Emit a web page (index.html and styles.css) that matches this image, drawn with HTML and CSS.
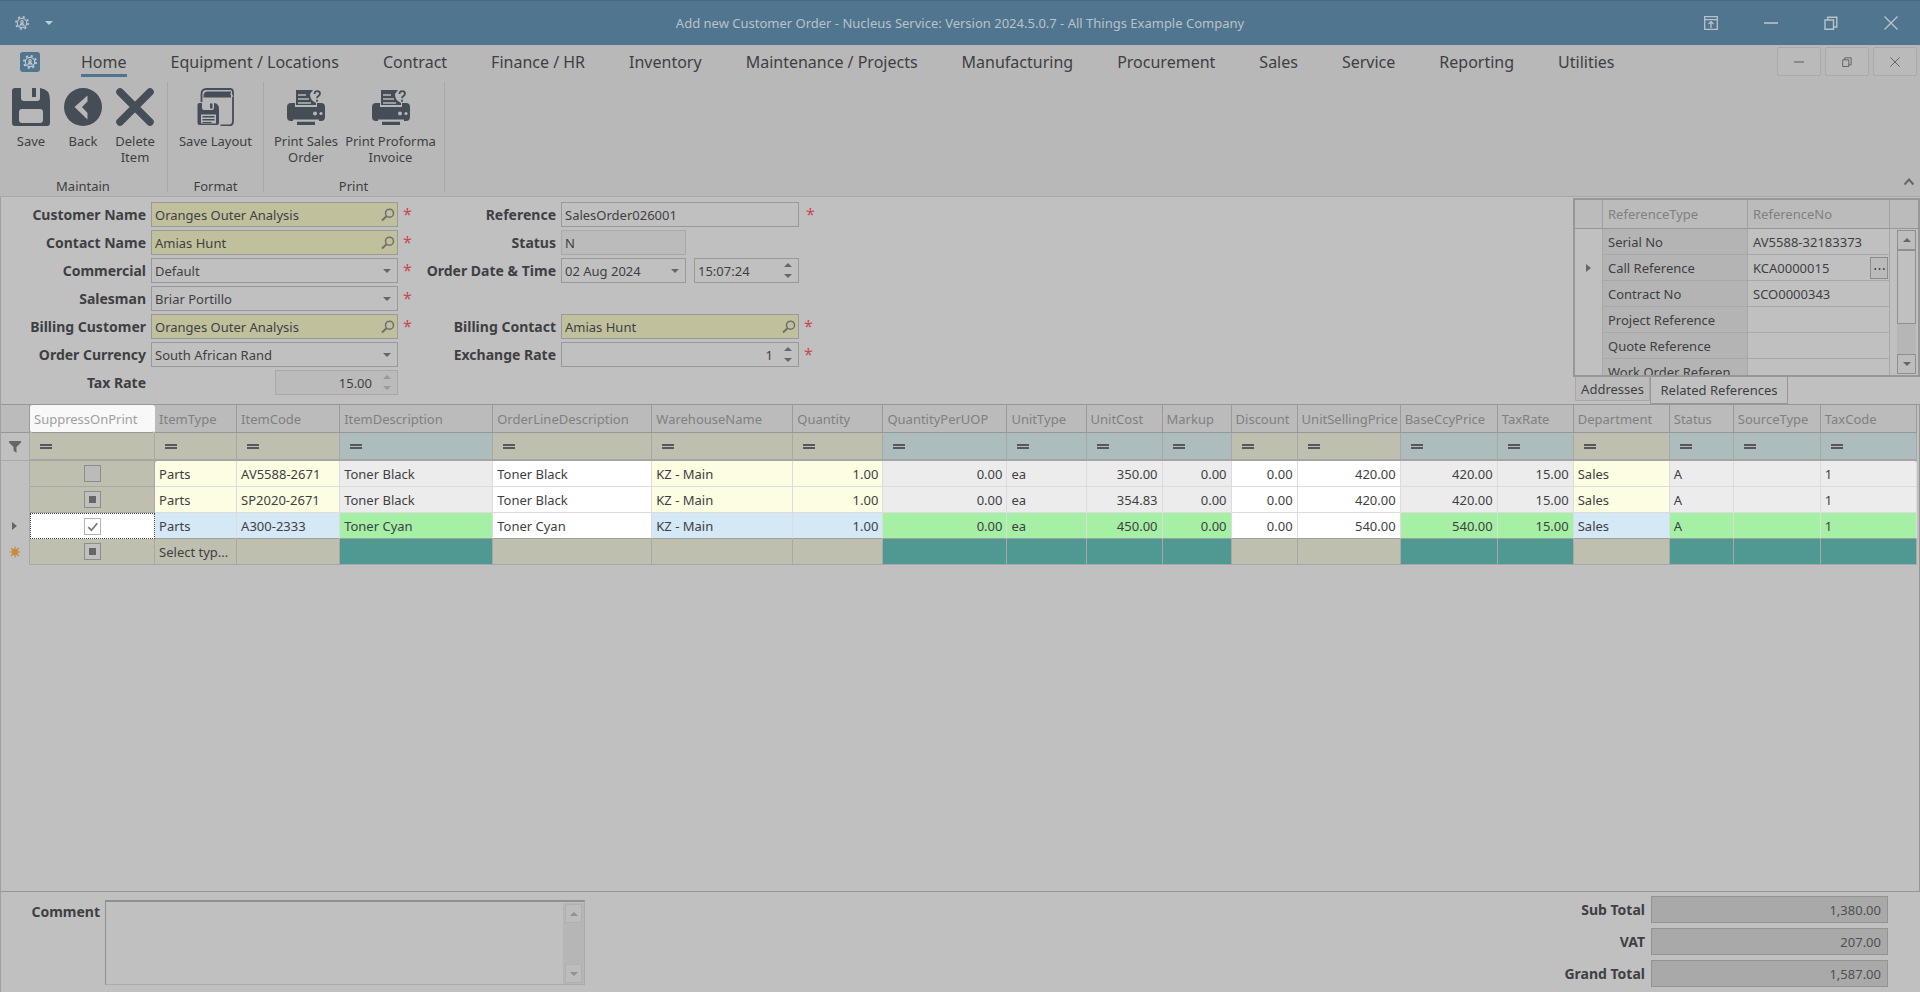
FILE: index.html
```html
<!DOCTYPE html>
<html lang="en">
<head>
<meta charset="utf-8">
<title>Add new Customer Order - Nucleus Service</title>
<link rel="stylesheet" href="styles.css">
</head>
<body>
<svg class="defs" aria-hidden="true">
  <symbol id="gear" viewBox="0 0 24 24"><g fill="none" stroke="currentColor" stroke-width="2"><circle cx="12" cy="12" r="8"/><circle cx="12" cy="12" r="10.5" stroke-width="3" stroke-dasharray="3.6 4.65"/><circle cx="12" cy="10" r="2"/><path d="M8 17l2.500-4h3l2.500 4M12 13v4"/></g></symbol>
  <symbol id="lens" viewBox="0 0 14 14"><g fill="none" stroke="currentColor" stroke-width="1.500"><circle cx="8.500" cy="5.200" r="4"/><path d="M5.500 8.200L1 12.500" stroke-width="2"/></g></symbol>
  <symbol id="minus" viewBox="0 0 14 14"><path d="M0 7h14" stroke="currentColor" stroke-width="1.600"/></symbol>
  <symbol id="restore" viewBox="0 0 14 14"><path d="M1 4h8.500v9.300H1zM3.800 4V1.200h9V11H9.500" fill="none" stroke="currentColor" stroke-width="1.400"/></symbol>
  <symbol id="cross" viewBox="0 0 14 14"><path d="M.5.5l13 13M13.500.5l-13 13" stroke="currentColor" stroke-width="1.400"/></symbol>
  <symbol id="printer" viewBox="0 0 38 38"><g fill="currentColor">
    <path d="M9 2h17l-3 4 1 5 5 4v2H9z"/><path d="M4 15h4v4h22v-4h4a4 4 0 0 1 4 4v10a4 4 0 0 1-4 4H4a4 4 0 0 1-4-4V19a4 4 0 0 1 4-4z"/><path d="M10 33.500h18V37H10z"/></g>
    <path d="M11 7h8M11 11h11M11 15h13" stroke="#b8b8b8" stroke-width="1.500"/><path d="M6 32.500h26" stroke="#b8b8b8" stroke-width="2"/><circle cx="28" cy="25.500" r="2" fill="#b8b8b8"/><circle cx="34" cy="25.500" r="1.600" fill="#b8b8b8"/>
    <circle cx="30" cy="8" r="6.500" fill="#b8b8b8"/><path d="M27.500 6q0-2.800 2.700-2.800T33 5.600Q33 7 31.500 8T30 10.200M30 11.800v2" fill="none" stroke="currentColor" stroke-width="1.800"/></symbol>
</svg>

<header class="titlebar">
  <div class="quick">
    <button class="plain" aria-label="Application"><svg class="i14"><use href="#gear"/></svg></button>
    <button class="plain" aria-label="Customise"><span class="tri down light"></span></button>
  </div>
  <h1>Add new Customer Order - Nucleus Service: Version 2024.5.0.7 - All Things Example Company</h1>
  <div class="winbtns">
    <button class="plain" aria-label="Ribbon display"><svg class="i14" viewBox="0 0 14 14"><path d="M.7.7h12.600v12.600H.7zM.7 3.700h12.600M7 12V6M4.500 8L7 5.700 9.500 8" fill="none" stroke="currentColor" stroke-width="1.300"/></svg></button>
    <button class="plain" aria-label="Minimise"><svg class="i14"><use href="#minus"/></svg></button>
    <button class="plain" aria-label="Restore"><svg class="i14"><use href="#restore"/></svg></button>
    <button class="plain" aria-label="Close"><svg class="i14"><use href="#cross"/></svg></button>
  </div>
</header>

<div class="ribbon">
  <div class="menubar">
    <button class="apptile" aria-label="File"><svg class="i14"><use href="#gear"/></svg></button>
    <nav>
      <a href="#" class="on">Home</a><a href="#">Equipment / Locations</a><a href="#">Contract</a><a href="#">Finance / HR</a><a href="#">Inventory</a><a href="#">Maintenance / Projects</a><a href="#">Manufacturing</a><a href="#">Procurement</a><a href="#">Sales</a><a href="#">Service</a><a href="#">Reporting</a><a href="#">Utilities</a>
    </nav>
    <div class="childbtns">
      <button aria-label="Minimise document"><svg class="i10"><use href="#minus"/></svg></button>
      <button aria-label="Restore document"><svg class="i10"><use href="#restore"/></svg></button>
      <button aria-label="Close document"><svg class="i10"><use href="#cross"/></svg></button>
    </div>
  </div>
  <div class="groups">
    <section class="group">
      <div class="tools">
        <button class="tool"><svg viewBox="0 0 38 38"><path fill="currentColor" fill-rule="evenodd" d="M3 0h6v10q0 3 3 3h13q3 0 3-3V0q10 1 10 12v23q0 3-3 3H3q-3 0-3-3V3q0-3 3-3zM10 21q-3 0-3 3v8q0 3 3 3h18q3 0 3-3v-8q0-3-3-3z"/><path fill="currentColor" d="M20 0h4v9h-4z"/></svg>Save</button>
        <button class="tool"><svg viewBox="0 0 38 38"><path fill="currentColor" fill-rule="evenodd" d="M19 0a19 19 0 1 0 0 38a19 19 0 0 0 0-38zM23.500 7.500v6L18 19l5.500 6v6.500L10.500 19z"/></svg>Back</button>
        <button class="tool"><svg viewBox="0 0 38 38"><path d="M4 4l30 30M34 4L4 34" stroke="currentColor" stroke-width="7.500" stroke-linecap="round"/></svg>Delete Item</button>
      </div>
      <h2>Maintain</h2>
    </section>
    <section class="group">
      <div class="tools">
        <button class="tool wide"><svg viewBox="0 0 38 38"><path d="M4.500 14V6q0-5 5-5H33q3 0 3 3v29q0 4.500-4 4.500H23.500" fill="none" stroke="currentColor" stroke-width="1.800"/><path d="M6.500 8q0-4.500 4-4.500H34v6H6.500z" fill="currentColor"/><path d="M36 9q-.5-3-3-3" fill="none" stroke="#b8b8b8"/><path fill="currentColor" fill-rule="evenodd" d="M2.500 15H5v5q0 2 2 2h8q2 0 2-2v-5q5 .500 5 6v14q0 2-2 2H2.500q-2 0-2-2V17q0-2 2-2zM4 26.500v9h15v-9z"/><path fill="currentColor" d="M13 15.500h2.500v5H13zM5.500 28h12v1.500h-12zM5.500 31h12v1.500h-12zM5.500 34h9v1h-9z"/></svg>Save Layout</button>
      </div>
      <h2>Format</h2>
    </section>
    <section class="group">
      <div class="tools">
        <button class="tool mid"><svg><use href="#printer"/></svg>Print Sales<br>Order</button>
        <button class="tool wide"><svg><use href="#printer"/></svg>Print Proforma<br>Invoice</button>
      </div>
      <h2>Print</h2>
    </section>
    <button class="plain collapse" aria-label="Collapse ribbon"><svg class="i10" viewBox="0 0 10 10"><path d="M.5 7.500L5 2.500l4.500 5" fill="none" stroke="currentColor" stroke-width="2"/></svg></button>
  </div>
</div>

<main>
  <div class="top">
    <form class="order">
      <div class="fields">
        <label for="cn">Customer Name</label><div class="field req"><input id="cn" value="Oranges Outer Analysis"><button type="button" aria-label="Find customer"><svg class="i14"><use href="#lens"/></svg></button></div><span class="star">*</span>
        <label for="ct">Contact Name</label><div class="field req"><input id="ct" value="Amias Hunt"><button type="button" aria-label="Find contact"><svg class="i14"><use href="#lens"/></svg></button></div><span class="star">*</span>
        <label for="cm">Commercial</label><div class="field"><select id="cm"><option>Default</option></select><span class="tri down"></span></div><span class="star">*</span>
        <label for="sm">Salesman</label><div class="field"><select id="sm"><option>Briar Portillo</option></select><span class="tri down"></span></div><span class="star">*</span>
        <label for="bc">Billing Customer</label><div class="field req"><input id="bc" value="Oranges Outer Analysis"><button type="button" aria-label="Find billing customer"><svg class="i14"><use href="#lens"/></svg></button></div><span class="star">*</span>
        <label for="oc">Order Currency</label><div class="field"><select id="oc"><option>South African Rand</option></select><span class="tri down"></span></div><span></span>
        <label for="tr">Tax Rate</label><div class="field off short-end"><input id="tr" class="num" value="15.00" readonly><span class="spin"><i class="tri up"></i><i class="tri down"></i></span></div><span></span>
      </div>
      <div class="fields second">
        <label for="rf">Reference</label><div class="field"><input id="rf" value="SalesOrder026001"></div><span class="star gap">*</span>
        <label for="st">Status</label><div class="field off short"><input id="st" value="N" readonly></div><span></span>
        <label for="dt">Order Date &amp; Time</label>
        <div class="pair"><div class="field short"><input id="dt" value="02 Aug 2024"><span class="tri down"></span></div><div class="field"><input aria-label="Order time" value="15:07:24"><span class="spin"><i class="tri up"></i><i class="tri down"></i></span></div></div><span></span>
        <label class="row5" for="bt">Billing Contact</label><div class="field req row5"><input id="bt" value="Amias Hunt"><button type="button" aria-label="Find billing contact"><svg class="i14"><use href="#lens"/></svg></button></div><span class="star row5">*</span>
        <label class="row6" for="xr">Exchange Rate</label><div class="field row6"><input id="xr" class="num" value="1"><span class="spin"><i class="tri up"></i><i class="tri down"></i></span></div><span class="star row6">*</span>
      </div>
    </form>
    <aside>
      <div class="refs">
        <table>
          <colgroup><col class="r0"><col class="r1"><col class="r2"><col></colgroup>
          <thead><tr><th></th><th>ReferenceType</th><th>ReferenceNo</th><th></th></tr></thead>
          <tbody>
            <tr><td></td><td>Serial No</td><td>AV5588-32183373</td></tr>
            <tr class="cur"><td><span class="tri right"></span></td><td>Call Reference</td><td><div class="withbtn">KCA0000015<button aria-label="Browse">&#8943;</button></div></td></tr>
            <tr><td></td><td>Contract No</td><td>SCO0000343</td></tr>
            <tr><td></td><td>Project Reference</td><td></td></tr>
            <tr><td></td><td>Quote Reference</td><td></td></tr>
            <tr><td></td><td>Work Order Referen</td><td></td></tr>
          </tbody>
        </table>
        <div class="sbar"><button aria-label="Scroll up"><i class="tri up"></i></button><span class="thumb"></span><button class="end" aria-label="Scroll down"><i class="tri down"></i></button></div>
      </div>
      <div class="tabs"><button>Addresses</button><button class="on">Related References</button></div>
    </aside>
  </div>

  <div class="lines">
    <table>
      <colgroup><col class="c0"><col class="c1"><col class="c2"><col class="c3"><col class="c4"><col class="c5"><col class="c6"><col class="c7"><col class="c8"><col class="c9"><col class="c10"><col class="c11"><col class="c12"><col class="c13"><col class="c14"><col class="c15"><col class="c16"><col class="c17"><col class="c18"><col class="c19"></colgroup>
      <thead>
        <tr><th></th><th class="lit">SuppressOnPrint</th><th>ItemType</th><th>ItemCode</th><th>ItemDescription</th><th>OrderLineDescription</th><th>WarehouseName</th><th>Quantity</th><th>QuantityPerUOP</th><th>UnitType</th><th>UnitCost</th><th>Markup</th><th>Discount</th><th>UnitSellingPrice</th><th>BaseCcyPrice</th><th>TaxRate</th><th>Department</th><th>Status</th><th>SourceType</th><th>TaxCode</th></tr>
      </thead>
      <tbody>
        <tr class="filter"><td><svg class="funnel" viewBox="0 0 12 12"><path d="M0 0h12v1.500L7.500 6v6L4.500 9.500V6L0 1.500z" fill="currentColor"/></svg></td><td><i class="eq"></i></td><td><i class="eq"></i></td><td><i class="eq"></i></td><td class="b"><i class="eq"></i></td><td><i class="eq"></i></td><td><i class="eq"></i></td><td><i class="eq"></i></td><td class="b"><i class="eq"></i></td><td class="b"><i class="eq"></i></td><td class="b"><i class="eq"></i></td><td class="b"><i class="eq"></i></td><td><i class="eq"></i></td><td><i class="eq"></i></td><td class="b"><i class="eq"></i></td><td class="b"><i class="eq"></i></td><td><i class="eq"></i></td><td class="b"><i class="eq"></i></td><td class="b"><i class="eq"></i></td><td class="b"><i class="eq"></i></td></tr>
        <tr class="row"><td></td><td class="chk"><input type="checkbox" aria-label="Suppress on print, line 1"></td><td class="y first">Parts</td><td class="y">AV5588-2671</td><td class="g">Toner Black</td><td>Toner Black</td><td class="y">KZ - Main</td><td class="y n">1.00</td><td class="g n">0.00</td><td class="g">ea</td><td class="g n">350.00</td><td class="g n">0.00</td><td class="n">0.00</td><td class="n">420.00</td><td class="g n">420.00</td><td class="g n">15.00</td><td class="y">Sales</td><td class="g">A</td><td class="g"></td><td class="g last">1</td></tr>
        <tr class="row"><td></td><td class="chk"><input type="checkbox" class="mixed" aria-label="Suppress on print, line 2"></td><td class="y">Parts</td><td class="y">SP2020-2671</td><td class="g">Toner Black</td><td>Toner Black</td><td class="y">KZ - Main</td><td class="y n">1.00</td><td class="g n">0.00</td><td class="g">ea</td><td class="g n">354.83</td><td class="g n">0.00</td><td class="n">0.00</td><td class="n">420.00</td><td class="g n">420.00</td><td class="g n">15.00</td><td class="y">Sales</td><td class="g">A</td><td class="g"></td><td class="g">1</td></tr>
        <tr class="row sel"><td><span class="tri right"></span></td><td class="chk"><label class="tick"><input type="checkbox" checked aria-label="Suppress on print, line 3"><svg viewBox="0 0 16 16"><path d="M4 8.500l3 3L12.500 5" fill="none" stroke="currentColor" stroke-width="1.600"/></svg></label></td><td class="y">Parts</td><td class="y">A300-2333</td><td class="g">Toner Cyan</td><td>Toner Cyan</td><td class="y">KZ - Main</td><td class="y n">1.00</td><td class="g n">0.00</td><td class="g">ea</td><td class="g n">450.00</td><td class="g n">0.00</td><td class="n">0.00</td><td class="n">540.00</td><td class="g n">540.00</td><td class="g n">15.00</td><td class="y">Sales</td><td class="g">A</td><td class="g"></td><td class="g">1</td></tr>
        <tr class="new"><td><svg class="sun" viewBox="0 0 12 12"><circle cx="6" cy="6" r="3.200" fill="currentColor"/><path d="M6 .5v11M.5 6h11M2 2l8 8M10 2l-8 8" stroke="currentColor" stroke-width="1.200"/></svg></td><td class="chk"><input type="checkbox" class="mixed" aria-label="Suppress on print, new line"></td><td>Select typ...</td><td></td><td class="b"></td><td></td><td></td><td></td><td class="b"></td><td class="b"></td><td class="b"></td><td class="b"></td><td></td><td></td><td class="b"></td><td class="b"></td><td></td><td class="b"></td><td class="b"></td><td class="b"></td></tr>
      </tbody>
    </table>
  </div>

  <footer>
    <div class="comment">
      <label for="cmt">Comment</label>
      <div class="box"><textarea id="cmt"></textarea><div class="sbar dim"><button aria-label="Scroll up"><i class="tri up"></i></button><button class="end" aria-label="Scroll down"><i class="tri down"></i></button></div></div>
    </div>
    <div class="totals">
      <label for="t1">Sub Total</label><input id="t1" value="1,380.00" readonly>
      <label for="t2">VAT</label><input id="t2" value="207.00" readonly>
      <label for="t3">Grand Total</label><input id="t3" value="1,587.00" readonly>
    </div>
  </footer>
</main>
</body>
</html>
```
FILE: styles.css
```css
* { box-sizing: border-box; }
body {
  margin: 0; min-height: 100vh; display: flex; flex-direction: column;
  background: #c0c0c0; color: #3f3f43;
  font: 13px/16px "Noto Sans", Tahoma, sans-serif;
}
button, input, select, textarea { font: inherit; color: inherit; margin: 0; padding: 0; border: 0; background: none; border-radius: 0; outline: 0; }
h1, h2 { margin: 0; font-weight: 400; font-size: 13px; }
a { color: inherit; text-decoration: none; }
svg { display: block; flex: none; }
table { border-collapse: separate; border-spacing: 0; table-layout: fixed; width: 100%; }
th { font-weight: 400; text-align: left; }
.defs { position: absolute; width: 0; height: 0; }
.i14 { width: 14px; height: 14px; }
.i10 { width: 10px; height: 10px; }
.plain { display: flex; align-items: center; justify-content: center; }

.tri { display: block; width: 0; height: 0; border: 4px solid transparent; flex: none; }
.tri.down { border-top-color: #666; border-bottom: 0; }
.tri.up { border-bottom-color: #666; border-top: 0; }
.tri.right { border-left: 5px solid #666; border-right: 0; }
.tri.light { border-top-color: #c6ccd0; }

.titlebar { display: grid; grid-template-columns: 1fr auto 1fr; align-items: center; height: 45px; background: #50758e; border-top: 1px solid #476a80; color: #b9c2c8; }
.quick { display: flex; gap: 16px; padding-left: 15px; }
.winbtns { display: flex; justify-content: flex-end; gap: 46px; padding-right: 22px; }

.ribbon { background: #b8b8b8; border-bottom: 1px solid #a8a8a8; height: 152px; }
.menubar { display: flex; height: 34px; align-items: flex-start; }
.apptile { display: flex; align-items: center; justify-content: center; width: 20px; height: 20px; margin: 7px 41px 0 20px; background: #50758e; color: #c2cacf; border-radius: 3px; }
nav { display: flex; gap: 44px; flex: 1; font-size: 16px; line-height: 24px; padding-top: 5px; white-space: nowrap; }
nav a { padding-bottom: 0; border-bottom: 3px solid transparent; }
nav a.on { border-color: #50758e; }
.childbtns { display: flex; gap: 4px; padding: 2px 3px 0 0; }
.childbtns button { width: 44px; height: 29px; display: flex; align-items: center; justify-content: center; border: 1px solid #aaa; border-radius: 2px; background: #bababa; color: #666; }
.groups { display: flex; padding-top: 3px; }
.group { height: 110px; border-right: 1px solid #a8a8a8; padding: 0 6px 0 5px; display: flex; flex-direction: column; justify-content: space-between; }
.group:nth-child(2) { padding: 0; }
.group h2 { text-align: center; line-height: 12px; }
.tools { display: flex; }
.tool { width: 52px; padding-top: 6px; line-height: 16px; text-align: center; display: block; align-self: flex-start; }
.tool.mid { width: 74px; }
.tool.wide { width: 95px; white-space: nowrap; }
.tool.mid { white-space: nowrap; }
.tool svg { width: 38px; height: 38px; margin: 0 auto 7px; color: #454d56; }
.collapse { margin: auto 6px 4px auto; color: #666; height: 12px; }

main { flex: 1; display: flex; flex-direction: column; border-left: 1px solid #a0a0a0; }
.top { display: flex; justify-content: space-between; height: 207px; }
.order { display: flex; padding-top: 5px; }
.fields { display: grid; grid-template-columns: 145px 247px 18px; grid-auto-rows: 25px; row-gap: 3px; column-gap: 5px; align-content: start; }
.fields.second { grid-template-columns: 135px 238px 20px; }
.fields label, footer label { font-size: 14px; font-weight: 700; text-align: right; align-self: center; white-space: nowrap; }
.field { display: flex; align-items: center; border: 1px solid #999; padding: 0 6px 0 3px; height: 25px; min-width: 0; }
.field input, .field select { flex: 1; min-width: 0; width: 0; appearance: none; height: 100%; }
.field.req { background: #c0c09c; padding-right: 2px; }
.field.req button { color: #70706a; }
.field.off { background: #bbb; border-color: #a8a8a8; }
.off .tri { opacity: .4; }
.num { text-align: right; }
.num + .spin { margin-left: 11px; }
.short { width: 125px; }
.short-end { width: 123px; justify-self: end; }
.pair { display: grid; grid-template-columns: 125px 1fr; gap: 8px; }
.spin { display: flex; flex-direction: column; gap: 7px; }
.star { color: #c84a52; font-size: 16px; line-height: 24px; }
.star.gap { padding-left: 2px; }
.row5 { grid-row: 5; }
.row6 { grid-row: 6; }

aside { width: 347px; padding-top: 1px; }
.refs { display: flex; height: 179px; border: 2px solid #979797; overflow: hidden; position: relative; }
.refs .r0 { width: 28px; } .refs .r1 { width: 145px; } .refs .r2 { width: 142px; }
.refs tr > * { height: 26px; padding: 0 0 0 5px; overflow: hidden; white-space: nowrap; }
.refs th { height: 29px; background: #bbb; color: #808080; border-bottom: 1px solid #979797; border-right: 1px solid #a0a0a0; }
.refs th:last-child { border-right: 0; }
.refs td { border-right: 1px solid #a8a8a8; border-bottom: 1px solid #a8a8a8; }
.refs td:first-child { border-bottom: 0; }
.refs td:nth-child(2) { background: #b4b4b4; }
.refs td .tri.right { margin-left: 6px; }
.withbtn { display: flex; justify-content: space-between; align-items: center; }
.withbtn button { width: 18px; height: 22px; border: 1px solid #8c8c8c; background: #bbb; margin-right: 1px; line-height: 18px; }
.sbar { position: absolute; right: 2px; top: 30px; bottom: 1px; width: 19px; display: flex; flex-direction: column; background: #b6b6b6; }
.sbar button { height: 20px; border: 1px solid #8f8f8f; background: #bdbdbd; display: flex; align-items: center; justify-content: center; }
.sbar .thumb { height: 74px; border: 1px solid #8f8f8f; background: #c0c0c0; }
.sbar .end { margin-top: auto; }
.tabs { display: flex; align-items: flex-start; padding-left: 2px; }
.tabs button { height: 24px; width: 75px; background: #bbb; border: 1px solid #a8a8a8; border-top: 0; }
.tabs .on { height: 27px; width: 138px; border-color: #979797; background: #c0c0c0; }

.lines { flex: 1; border-top: 1px solid #979797; border-bottom: 1px solid #979797; border-right: 1px solid #979797; padding-right: 2px; }
.c0 { width: 29px; } .c1 { width: 125px; } .c2 { width: 82px; } .c3 { width: 103px; } .c4 { width: 153px; } .c5 { width: 159px; } .c6 { width: 141px; } .c7 { width: 90px; } .c8 { width: 124px; } .c9 { width: 79px; } .c10 { width: 76px; } .c11 { width: 69px; } .c12 { width: 66px; } .c13 { width: 103px; } .c14 { width: 97px; } .c15 { width: 76px; } .c16 { width: 96px; } .c17 { width: 64px; } .c18 { width: 87px; } .c19 { width: 96px; }
.lines th { height: 28px; background: #bbb; color: #808080; border-right: 1px solid #9b9b9b; border-bottom: 1px solid #979797; padding: 0 0 0 4px; white-space: nowrap; }
.lines th.lit { background: #f8f8f8; color: #a0a0a0; border-radius: 3px; border-right-color: #f8f8f8; }
.lines td { height: 26px; padding: 0 4px; border-right: 1px solid #a8a8a8; border-bottom: 1px solid #a8a8a8; background: #bebfae; white-space: nowrap; }
.lines tr td:first-child { background: #c0c0c0; border-bottom-color: #c0c0c0; padding: 0 0 0 8px; }
.lines .filter td { height: 28px; border-bottom: 2px solid #a5a5a5; }
.lines .filter td:first-child { border-bottom: 1px solid #a8a8a8; }
.lines .filter .b { background: #adbdbd; }
.eq { display: block; width: 12px; height: 5px; margin-left: 6px; border-top: 2px solid #58585c; border-bottom: 2px solid #58585c; }
.funnel { width: 12px; height: 12px; color: #666; }
.lines .tri.right { margin-left: 3px; }
.sun { width: 12px; height: 12px; color: #c98a45; }
.lines .row td:nth-child(n+3) { background: #fff; border-color: #dcdcdc; }
.lines .row td.y:nth-child(n) { background: #fdfde1; }
.lines .row td.g:nth-child(n) { background: #ececec; }
.lines .sel td.y:nth-child(n) { background: #d4e8f6; }
.lines .sel td.g:nth-child(n) { background: #a5f0a5; }
.lines .row td.first { border-top-left-radius: 3px; }
.lines .row td.last { border-top-right-radius: 3px; }
.lines .sel td:nth-child(n+3) { border-bottom-color: #a0a0a0; }
.lines .sel .chk { background: #fff; border: 1px dotted #444; }
.lines .new .b { background: #509892; }
td.n { text-align: right; }
.lines .chk { text-align: center; }
.chk input { appearance: none; display: block; width: 17px; height: 17px; margin: 0 auto; border: 1px solid #8c8c8c; background: #bbb; }
.chk .mixed { background: #666; border: 1px solid #8c8c8c; box-shadow: inset 0 0 0 4px #c0c0c0; }
.tick { display: grid; width: 17px; margin: 0 auto; color: #777; }
.tick > * { grid-area: 1 / 1; }
.tick input { background: #fff; border-color: #b4b4b4; }

footer { display: flex; justify-content: space-between; height: 100px; }
.comment { display: flex; padding: 8px 0 0 29px; gap: 5px; }
.comment label { align-self: flex-start; padding-top: 4px; width: 70px; }
.box { position: relative; width: 480px; height: 85px; border: 1px solid #aaa; border-top: 2px solid #8f8f8f; border-left-color: #8f8f8f; }
.box textarea { display: block; width: 100%; height: 100%; resize: none; padding: 2px 24px 2px 4px; }
.sbar.dim { top: 1px; right: 0; bottom: 0; width: 21px; padding: 1px 2px; }
.dim button { height: 19px; border-color: #b0b0b0; }
.dim .tri { opacity: .5; }
.totals { display: grid; grid-template-columns: auto 237px; grid-auto-rows: 27px; gap: 5px 6px; padding: 4px 32px 0 0; }
.totals input { width: 100%; background: #a9a9a9; border: 1px solid #939393; text-align: right; padding-right: 6px; color: #505050; }
```
